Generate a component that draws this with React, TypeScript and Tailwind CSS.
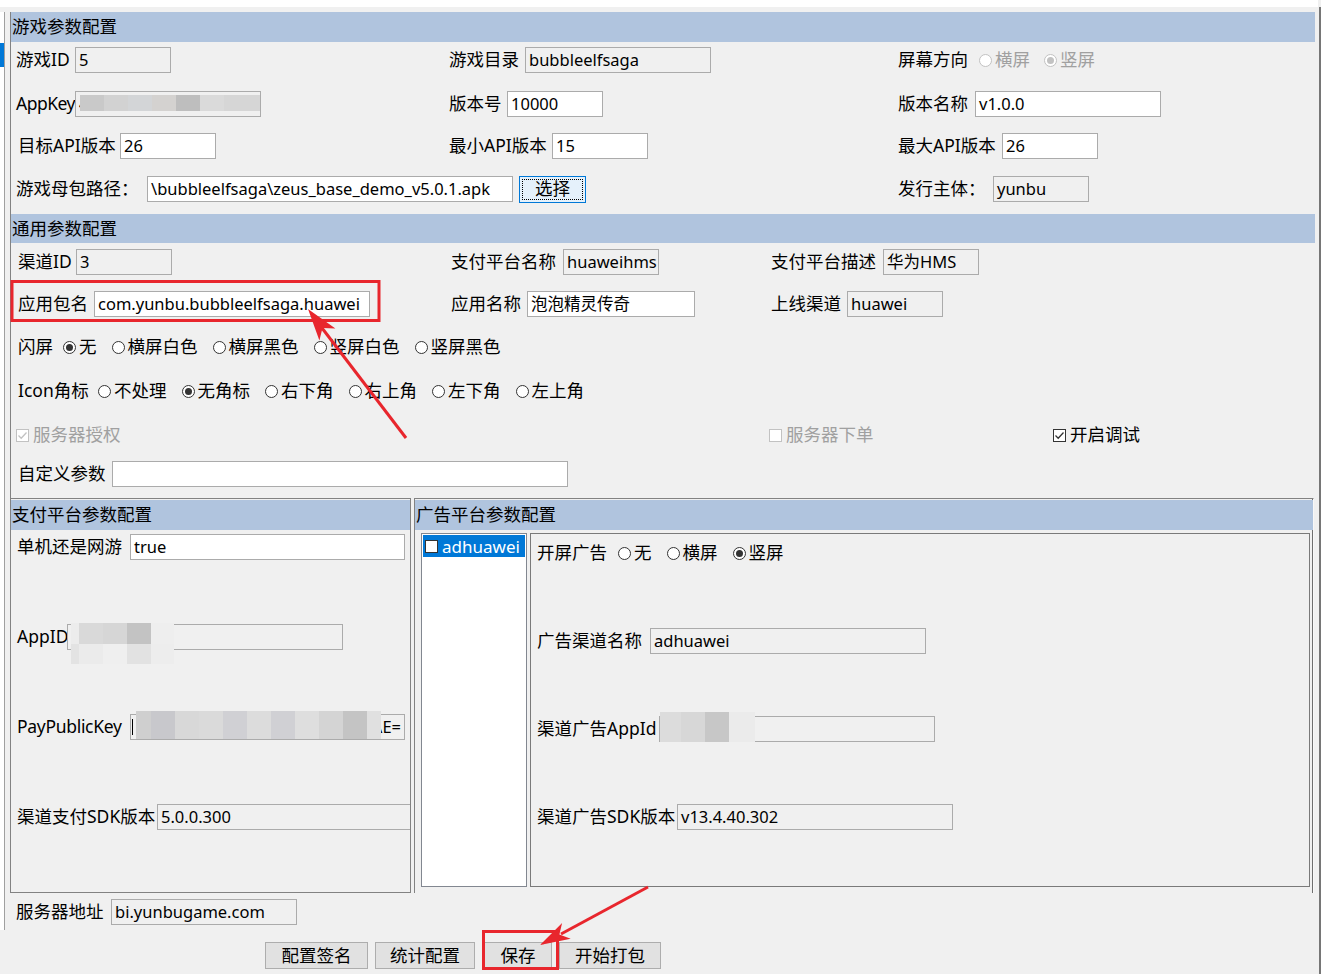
import clsx from "clsx";
import type { ReactNode } from "react";

// mosaic blocks that hide the secret keys in the screenshot
const appKeyBlur = [
  "w-[24px] bg-[#c9c9c9]",
  "w-[24px] bg-[#d2d2d2]",
  "w-[24px] bg-[#d3d5d7]",
  "w-[24px] bg-[#d4d2d0]",
  "w-[24px] bg-[#bebebe]",
  "w-[24px] bg-[#dadada]",
  "w-[36px] bg-[#d6d6d6]",
];
const appIdBlurTop = [
  "w-[8px] bg-[#ececec]",
  "w-[24px] bg-[#d9d9d9]",
  "w-[24px] bg-[#d6d6d6]",
  "w-[24px] bg-[#c3c3c3]",
  "w-[23px] bg-[#eeeeee]",
];
const appIdBlurBottom = [
  "w-[8px] bg-[#e3e3e3]",
  "w-[24px] bg-[#ebebeb]",
  "w-[24px] bg-[#efefef]",
  "w-[24px] bg-[#e2e2e2]",
  "w-[23px] bg-[#ededed]",
];
const payKeyBlur = [
  "w-[15px] bg-[#cfcfcf]",
  "w-[24px] bg-[#c8c8cc]",
  "w-[24px] bg-[#d8d8d8]",
  "w-[24px] bg-[#dadada]",
  "w-[24px] bg-[#d0d0d4]",
  "w-[24px] bg-[#dcdcdc]",
  "w-[24px] bg-[#d0d0d4]",
  "w-[24px] bg-[#dedede]",
  "w-[24px] bg-[#d4d4d4]",
  "w-[24px] bg-[#c4c4c4]",
  "w-[14px] bg-[#e0e0e0]",
];
const adIdBlur = [
  "w-[21px] bg-[#dcdcdc]",
  "w-[24px] bg-[#d7d7d7]",
  "w-[24px] bg-[#c7c7c7]",
  "w-[26px] bg-[#ebebeb]",
];

function Blur({ blocks, className }: { blocks: string[]; className: string }) {
  return (
    <div className={clsx("absolute flex", className)}>
      {blocks.map((b, i) => (
        <div key={i} className={clsx("h-full", b)} />
      ))}
    </div>
  );
}

function Label({ text, w, gray }: { text: string; w: string; gray?: boolean }) {
  return (
    <div className={clsx("shrink-0 whitespace-nowrap", w, gray && "text-[#a0a0a0]")}>
      {text}
    </div>
  );
}

function Box({
  w,
  value,
  white,
  end,
  clip = true,
  children,
}: {
  w: string;
  value?: string;
  white?: boolean;
  end?: boolean;
  clip?: boolean;
  children?: ReactNode;
}) {
  return (
    <div
      className={clsx(
        "relative h-[26px] shrink-0 border border-[#ababab] flex items-center px-[3px] whitespace-nowrap text-[16.5px]",
        w,
        white ? "bg-white" : "bg-[#f0f0f0]",
        clip && "overflow-hidden",
        end && "justify-end"
      )}
    >
      {value}
      {children}
    </div>
  );
}

function Radio({ checked, disabled }: { checked?: boolean; disabled?: boolean }) {
  return (
    <span
      className={clsx(
        "w-[13px] h-[13px] rounded-full border bg-white flex items-center justify-center shrink-0",
        disabled ? "border-[#c2c2c2]" : "border-[#333333]"
      )}
    >
      {checked && (
        <span className={clsx("w-[7px] h-[7px] rounded-full", disabled ? "bg-[#c2c2c2]" : "bg-[#333333]")} />
      )}
    </span>
  );
}

function Opt({ text, checked, disabled }: { text: string; checked?: boolean; disabled?: boolean }) {
  return (
    <div className="flex items-center shrink-0">
      <Radio checked={checked} disabled={disabled} />
      <span className={clsx("ml-[3px] whitespace-nowrap", disabled && "text-[#a0a0a0]")}>{text}</span>
    </div>
  );
}

function Check({ text, checked, disabled }: { text: string; checked?: boolean; disabled?: boolean }) {
  return (
    <div className="flex items-center">
      <span
        className={clsx(
          "w-[13px] h-[13px] border bg-white flex items-center justify-center",
          disabled ? "border-[#c2c2c2]" : "border-[#333333]"
        )}
      >
        {checked && (
          <svg width="11" height="11" viewBox="0 0 11 11">
            <polyline
              points="1.5,5.5 4.2,8.2 9.5,2.5"
              fill="none"
              stroke={disabled ? "#c2c2c2" : "#333333"}
              strokeWidth="1.3"
            />
          </svg>
        )}
      </span>
      <span className={clsx("ml-[4px] whitespace-nowrap", disabled && "text-[#a0a0a0]")}>{text}</span>
    </div>
  );
}

function Header({ title }: { title: string }) {
  return <div className="h-[30px] bg-[#b0c4de] flex items-center pl-[1px] whitespace-nowrap">{title}</div>;
}

function Btn({ text, w, className }: { text: string; w: string; className?: string }) {
  return (
    <div
      className={clsx(
        "h-[27px] bg-[#e1e1e1] border border-[#adadad] flex items-center justify-center shrink-0",
        w,
        className
      )}
    >
      {text}
    </div>
  );
}

function Annotations() {
  const red = "#e8262d";
  return (
    <svg className="absolute inset-0 pointer-events-none" width="1321" height="974" viewBox="0 0 1321 974">
      <rect x="12" y="281.5" width="367" height="39" fill="none" stroke={red} strokeWidth="3" />
      <rect x="483.5" y="931.5" width="74" height="37" fill="none" stroke={red} strokeWidth="3" />
      <line x1="406" y1="438" x2="322" y2="328" stroke={red} strokeWidth="3" />
      <polygon points="308,309 319.4,340.6 322.5,328.1 335.4,328.4" fill={red} />
      <line x1="648" y1="887" x2="561" y2="934" stroke={red} strokeWidth="3" />
      <polygon points="540,945 570.7,938.7 559.4,934.6 562.1,922.9" fill={red} />
    </svg>
  );
}

export default function App() {
  return (
    <div className="relative w-[1321px] h-[974px] overflow-hidden bg-[#f0f0f0] text-black text-[17.5px] leading-none font-['Noto_Sans','Noto_Sans_CJK_SC',sans-serif]">
      <div className="h-[7px] w-[1318px] bg-white" />
      <div className="h-[967px] border-r-2 border-[#767676]">
        <div className="flex items-start pt-[5px]">
          {/* list on the far left, mostly cut off */}
          <div className="w-[5px] h-[918px] bg-white border-r border-[#a0a0a0] pt-[31px] shrink-0">
            <div className="h-[24px] bg-[#0078d7]" />
          </div>

          <div className="ml-[5px] w-[1305px] shrink-0">
            <div className="border-l border-[#828282]">
              <Header title="游戏参数配置" />

              <div className="flex items-center h-[26px] mt-[5px] pl-[5px]">
                <div className="flex items-center w-[433px] shrink-0">
                  <Label text="游戏ID" w="w-[59px]" />
                  <Box w="w-[96px]" value="5" />
                </div>
                <div className="flex items-center w-[449px] shrink-0">
                  <Label text="游戏目录" w="w-[76px]" />
                  <Box w="w-[186px]" value="bubbleelfsaga" />
                </div>
                <div className="flex items-center">
                  <Label text="屏幕方向" w="w-[81px]" />
                  <div className="flex items-center gap-[14px]">
                    <Opt text="横屏" disabled />
                    <Opt text="竖屏" disabled checked />
                  </div>
                </div>
              </div>

              <div className="flex items-center h-[26px] mt-[18px] pl-[5px]">
                <div className="flex items-center w-[433px] shrink-0">
                  <Label text="AppKey" w="w-[59px] tracking-[-0.5px]" />
                  <Box w="w-[186px]" value="4">
                    <Blur blocks={appKeyBlur} className="left-[4px] top-[3px] h-[16px]" />
                  </Box>
                </div>
                <div className="flex items-center w-[449px] shrink-0">
                  <Label text="版本号" w="w-[58px]" />
                  <Box w="w-[96px]" value="10000" white />
                </div>
                <div className="flex items-center">
                  <Label text="版本名称" w="w-[77px]" />
                  <Box w="w-[186px]" value="v1.0.0" white />
                </div>
              </div>

              <div className="flex items-center h-[26px] mt-[16px] pl-[5px]">
                <div className="flex items-center w-[433px] shrink-0">
                  <Label text="目标API版本" w="w-[104px] pl-[2px]" />
                  <Box w="w-[96px]" value="26" white />
                </div>
                <div className="flex items-center w-[449px] shrink-0">
                  <Label text="最小API版本" w="w-[103px]" />
                  <Box w="w-[96px]" value="15" white />
                </div>
                <div className="flex items-center">
                  <Label text="最大API版本" w="w-[104px]" />
                  <Box w="w-[96px]" value="26" white />
                </div>
              </div>

              <div className="flex items-center h-[26px] mt-[17px] pl-[5px]">
                <div className="flex items-center w-[882px] shrink-0">
                  <Label text="游戏母包路径：" w="w-[131px]" />
                  <Box w="w-[366px]" value="\bubbleelfsaga\zeus_base_demo_v5.0.1.apk" white />
                  <div className="ml-[6px] w-[67px] h-[27px] border border-[#0078d7] bg-[#e5f1fb] p-[2px] shrink-0">
                    <div className="w-full h-full border border-dotted border-black flex items-center justify-center">
                      选择
                    </div>
                  </div>
                </div>
                <div className="flex items-center">
                  <Label text="发行主体：" w="w-[95px]" />
                  <Box w="w-[96px]" value="yunbu" />
                </div>
              </div>

              <div className="mt-[12px] h-[29px] bg-[#b0c4de] flex items-center pl-[1px]">通用参数配置</div>

              <div className="flex items-center h-[26px] mt-[6px] pl-[7px]">
                <div className="flex items-center w-[433px] shrink-0">
                  <Label text="渠道ID" w="w-[58px]" />
                  <Box w="w-[96px]" value="3" />
                </div>
                <div className="flex items-center w-[320px] shrink-0">
                  <Label text="支付平台名称" w="w-[112px]" />
                  <Box w="w-[96px]" value="huaweihms" />
                </div>
                <div className="flex items-center">
                  <Label text="支付平台描述" w="w-[112px]" />
                  <Box w="w-[96px]" value="华为HMS" />
                </div>
              </div>

              <div className="flex items-center h-[26px] mt-[16px] pl-[7px]">
                <div className="flex items-center w-[433px] shrink-0">
                  <Label text="应用包名" w="w-[76px]" />
                  <Box w="w-[276px]" value="com.yunbu.bubbleelfsaga.huawei" white />
                </div>
                <div className="flex items-center w-[320px] shrink-0">
                  <Label text="应用名称" w="w-[76px]" />
                  <Box w="w-[168px]" value="泡泡精灵传奇" white />
                </div>
                <div className="flex items-center">
                  <Label text="上线渠道" w="w-[76px]" />
                  <Box w="w-[96px]" value="huawei" />
                </div>
              </div>

              <div className="flex items-center h-[26px] mt-[17px] pl-[7px]">
                <Label text="闪屏" w="w-[45px]" />
                <div className="flex items-center gap-[15px]">
                  <Opt text="无" checked />
                  <Opt text="横屏白色" />
                  <Opt text="横屏黑色" />
                  <Opt text="竖屏白色" />
                  <Opt text="竖屏黑色" />
                </div>
              </div>

              <div className="flex items-center h-[26px] mt-[18px] pl-[7px]">
                <Label text="Icon角标" w="w-[80px]" />
                <div className="flex items-center gap-[15px]">
                  <Opt text="不处理" />
                  <Opt text="无角标" checked />
                  <Opt text="右下角" />
                  <Opt text="右上角" />
                  <Opt text="左下角" />
                  <Opt text="左上角" />
                </div>
              </div>

              <div className="flex items-center h-[26px] mt-[18px] pl-[5px]">
                <div className="w-[753px] shrink-0">
                  <Check text="服务器授权" checked disabled />
                </div>
                <div className="w-[284px] shrink-0">
                  <Check text="服务器下单" disabled />
                </div>
                <Check text="开启调试" checked />
              </div>

              <div className="flex items-center h-[26px] mt-[13px] pl-[7px]">
                <Label text="自定义参数" w="w-[94px]" />
                <Box w="w-[456px]" white />
              </div>

              <div className="flex mt-[11px] h-[395px]">
                {/* payment platform */}
                <div className="w-[400px] h-full border-t border-r border-b border-[#828282] shrink-0 overflow-hidden">
                  <div className="mt-[1px]">
                    <Header title="支付平台参数配置" />
                  </div>
                  <div className="pl-[6px]">
                    <div className="h-[90px] pt-[4px]">
                      <div className="flex items-center h-[26px]">
                        <Label text="单机还是网游" w="w-[113px]" />
                        <Box w="w-[275px]" value="true" white />
                      </div>
                    </div>
                    <div className="h-[90px] pt-[4px]">
                      <div className="flex items-center h-[26px]">
                        <Label text="AppID" w="w-[50px]" />
                        <Box w="w-[276px]" clip={false}>
                          <div className="absolute left-[3px] top-[-2px] flex flex-col">
                            <div className="flex h-[21px]">
                              {appIdBlurTop.map((b, i) => (
                                <div key={i} className={clsx("h-full", b)} />
                              ))}
                            </div>
                            <div className="flex h-[20px]">
                              {appIdBlurBottom.map((b, i) => (
                                <div key={i} className={clsx("h-full", b)} />
                              ))}
                            </div>
                          </div>
                        </Box>
                      </div>
                    </div>
                    <div className="h-[90px] pt-[4px]">
                      <div className="flex items-center h-[26px]">
                        <Label text="PayPublicKey" w="w-[113px] tracking-[-0.3px]" />
                        <Box w="w-[275px]" value="AE=" end clip={false}>
                          <div className="absolute left-[1px] top-0 bottom-0 w-[4px] flex items-center">
                            <div className="w-[1px] h-[16px] bg-black" />
                          </div>
                          <Blur blocks={payKeyBlur} className="left-[5px] top-[-4px] h-[28px]" />
                        </Box>
                      </div>
                    </div>
                    <div className="h-[90px] pt-[4px]">
                      <div className="flex items-center h-[26px]">
                        <Label text="渠道支付SDK版本" w="w-[140px]" />
                        <Box w="w-[275px]" value="5.0.0.300" />
                      </div>
                    </div>
                  </div>
                </div>

                {/* ad platform */}
                <div className="ml-[3px] w-[900px] h-full border-t border-l border-[#828282] border-r border-r-[#f8f8f8] shadow-[inset_-1px_0_0_#6e6e6e] shrink-0">
                  <div className="mt-[1px]">
                    <Header title="广告平台参数配置" />
                  </div>
                  <div className="flex pt-[3px] pl-[6px]">
                    <div className="w-[106px] h-[354px] bg-white border border-[#828790] p-[1px] shrink-0">
                      <div className="h-[22px] bg-[#0078d7] flex items-center pl-[2px] text-white">
                        <span className="w-[13px] h-[13px] bg-white border border-[#333333] shrink-0" />
                        <span className="ml-[4px] text-[17px]">adhuawei</span>
                      </div>
                    </div>
                    <div className="ml-[3px] w-[780px] h-[354px] border border-[#7a7a7a] pl-[6px] shrink-0">
                      <div className="h-[88px] pt-[6px]">
                        <div className="flex items-center h-[26px]">
                          <Label text="开屏广告" w="w-[81px]" />
                          <div className="flex items-center gap-[15px]">
                            <Opt text="无" />
                            <Opt text="横屏" />
                            <Opt text="竖屏" checked />
                          </div>
                        </div>
                      </div>
                      <div className="h-[88px] pt-[6px]">
                        <div className="flex items-center h-[26px]">
                          <Label text="广告渠道名称" w="w-[113px]" />
                          <Box w="w-[276px]" value="adhuawei" />
                        </div>
                      </div>
                      <div className="h-[88px] pt-[6px]">
                        <div className="flex items-center h-[26px]">
                          <Label text="渠道广告AppId" w="w-[122px]" />
                          <Box w="w-[276px]" clip={false}>
                            <Blur blocks={adIdBlur} className="left-[0px] top-[-5px] h-[30px]" />
                          </Box>
                        </div>
                      </div>
                      <div className="h-[88px] pt-[6px]">
                        <div className="flex items-center h-[26px]">
                          <Label text="渠道广告SDK版本" w="w-[140px]" />
                          <Box w="w-[276px]" value="v13.4.40.302" />
                        </div>
                      </div>
                    </div>
                  </div>
                </div>
              </div>
            </div>

            <div className="flex items-center h-[26px] mt-[6px] pl-[6px]">
              <Label text="服务器地址" w="w-[95px]" />
              <Box w="w-[186px]" value="bi.yunbugame.com" />
            </div>
          </div>
        </div>

        <div className="flex mt-[12px] pl-[265px]">
          <Btn text="配置签名" w="w-[103px]" />
          <Btn text="统计配置" w="w-[100px]" className="ml-[7px]" />
          <Btn text="保存" w="w-[68px]" className="ml-[9px]" />
          <Btn text="开始打包" w="w-[102px]" className="ml-[7px]" />
        </div>
      </div>

      <Annotations />
    </div>
  );
}
